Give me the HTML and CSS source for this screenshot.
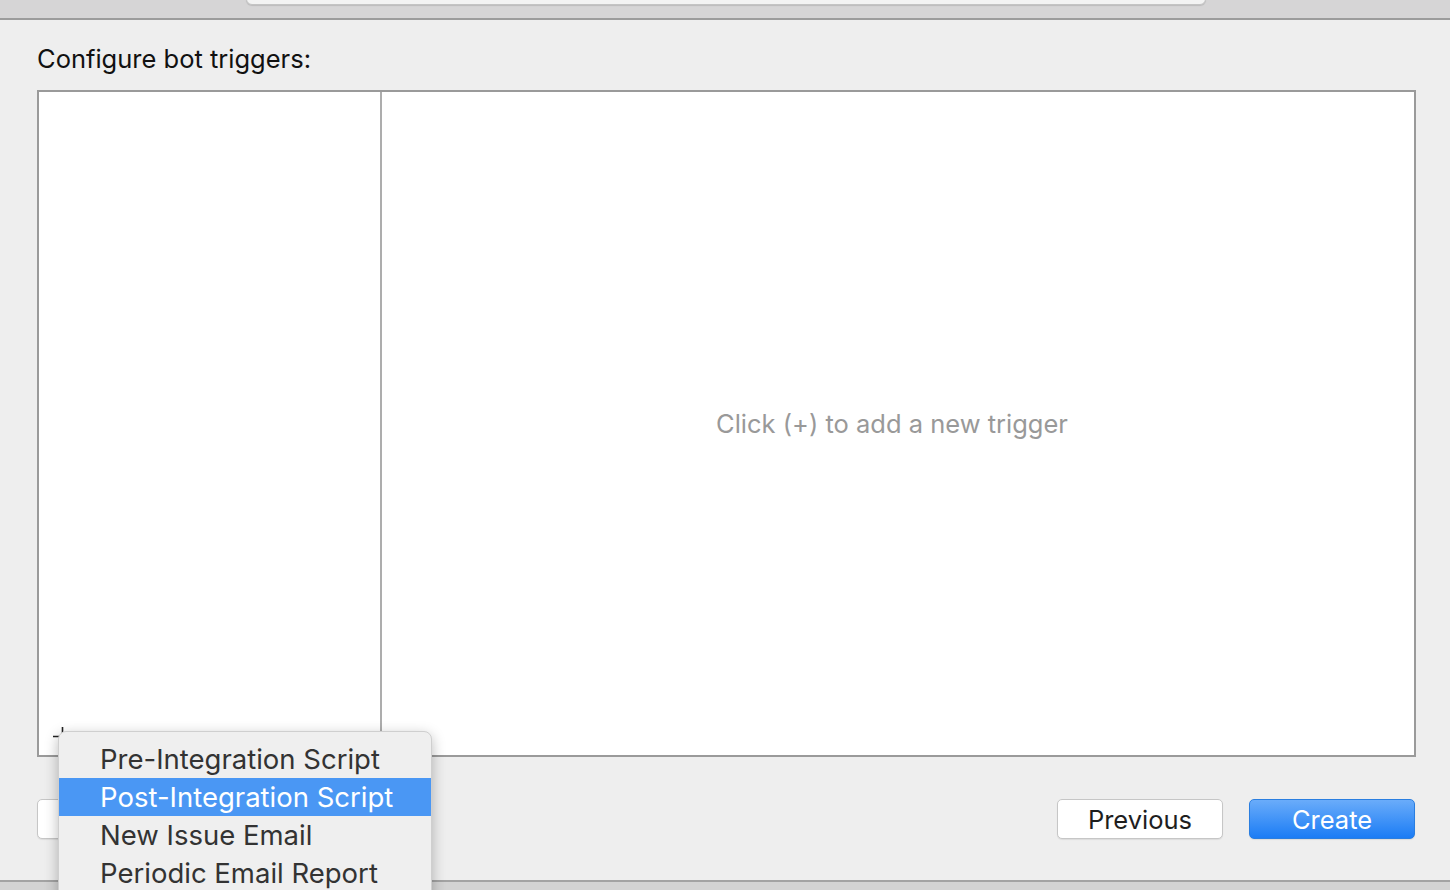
FILE: index.html
```html
<!DOCTYPE html>
<html>
<head>
<meta charset="utf-8">
<link rel="stylesheet" href="styles.css">
</head>
<body>
<div class="window">
  <div class="toolbar">
    <div class="field"></div>
  </div>
  <div class="content">
    <div class="label">Configure bot triggers:</div>
    <div class="box">
      <div class="list-pane">
        <div class="list-footer">
          <svg class="plus" width="20" height="20" viewBox="0 0 20 20"><path d="M1 10.5H19M10.5 1V19" stroke="#222" stroke-width="1.6" fill="none"/></svg>
        </div>
      </div>
      <div class="detail-pane">
        <div class="placeholder">Click (+) to add a new trigger</div>
      </div>
    </div>
    <div class="buttons">
      <button class="btn btn-left" aria-label="Cancel"></button>
      <div class="spacer"></div>
      <button class="btn">Previous</button>
      <button class="btn btn-primary">Create</button>
    </div>
  </div>
  <div class="bottom-strip"></div>
  <div class="menu">
    <div class="item">Pre-Integration Script</div>
    <div class="item selected">Post-Integration Script</div>
    <div class="item">New Issue Email</div>
    <div class="item">Periodic Email Report</div>
  </div>
</div>
</body>
</html>
```
FILE: styles.css
```css
* { box-sizing: border-box; }
html, body {
  margin: 0;
  padding: 0;
  width: 1450px;
  height: 890px;
  overflow: hidden;
  font-family: Inter, "Liberation Sans", Arial, sans-serif;
  background: #eeeeee;
}
.window {
  position: relative;
  width: 1450px;
  height: 890px;
  display: flex;
  flex-direction: column;
}
.toolbar {
  height: 20px;
  background: #d6d5d6;
  border-bottom: 2px solid #9c9c9c;
  position: relative;
}
.field {
  position: absolute;
  left: 246px;
  top: -8px;
  width: 960px;
  height: 13px;
  background: #f3f3f3;
  border: 1px solid #c4c4c4;
  border-radius: 6px;
  box-shadow: 0 1px 1px rgba(0,0,0,0.12);
}
.content {
  flex: 1;
  background: #eeeeee;
  padding: 0 34px 0 37px;
  display: flex;
  flex-direction: column;
}
.label {
  margin-top: 24px;
  font-size: 25.5px;
  line-height: 30px;
  color: #111;
  height: 30px;
}
.box {
  margin-top: 16px;
  height: 667px;
  border: 2px solid #9a9a9a;
  background: #fff;
  display: flex;
}
.list-pane {
  width: 343px;
  border-right: 2px solid #adadad;
  display: flex;
  flex-direction: column;
  justify-content: flex-end;
}
.list-footer {
  height: 30px;
  padding-left: 13px;
  padding-top: 1px;
}
.plus {
  display: block;
}
.detail-pane {
  flex: 1;
  display: flex;
  align-items: center;
  justify-content: center;
}
.placeholder {
  font-size: 25.5px;
  color: #999999;
  margin-right: 12px;
}
.buttons {
  margin-top: 42px;
  display: flex;
  align-items: center;
  padding-right: 1px;
}
.spacer { flex: 1; }
.btn {
  width: 166px;
  height: 40px;
  font-family: inherit;
  font-size: 25.5px;
  color: #1e1e1e;
  background: #fff;
  border: 1px solid #c6c6c6;
  border-radius: 5px;
  box-shadow: 0 1px 1px rgba(0,0,0,0.08);
  padding: 0;
  margin-left: 26px;
}
.btn-left { margin-left: 0; }
.btn-primary {
  color: #fff;
  border: 1px solid #2a7ee0;
  background: linear-gradient(#6aacfa, #1b7cf5);
}
.bottom-strip {
  height: 10px;
  background: #d3d3d3;
  border-top: 2px solid #a3a3a3;
}
.menu {
  position: absolute;
  left: 58px;
  top: 731px;
  width: 374px;
  height: 180px;
  background: #efefef;
  border: 1px solid #cfcfcf;
  border-radius: 8px;
  padding-top: 8px;
  box-shadow: 0 4px 14px rgba(0,0,0,0.28);
}
.item {
  height: 38px;
  line-height: 38px;
  padding-left: 41px;
  font-size: 27.5px;
  color: #333;
}
.item.selected {
  background: #4a97f4;
  color: #fff;
}
```
